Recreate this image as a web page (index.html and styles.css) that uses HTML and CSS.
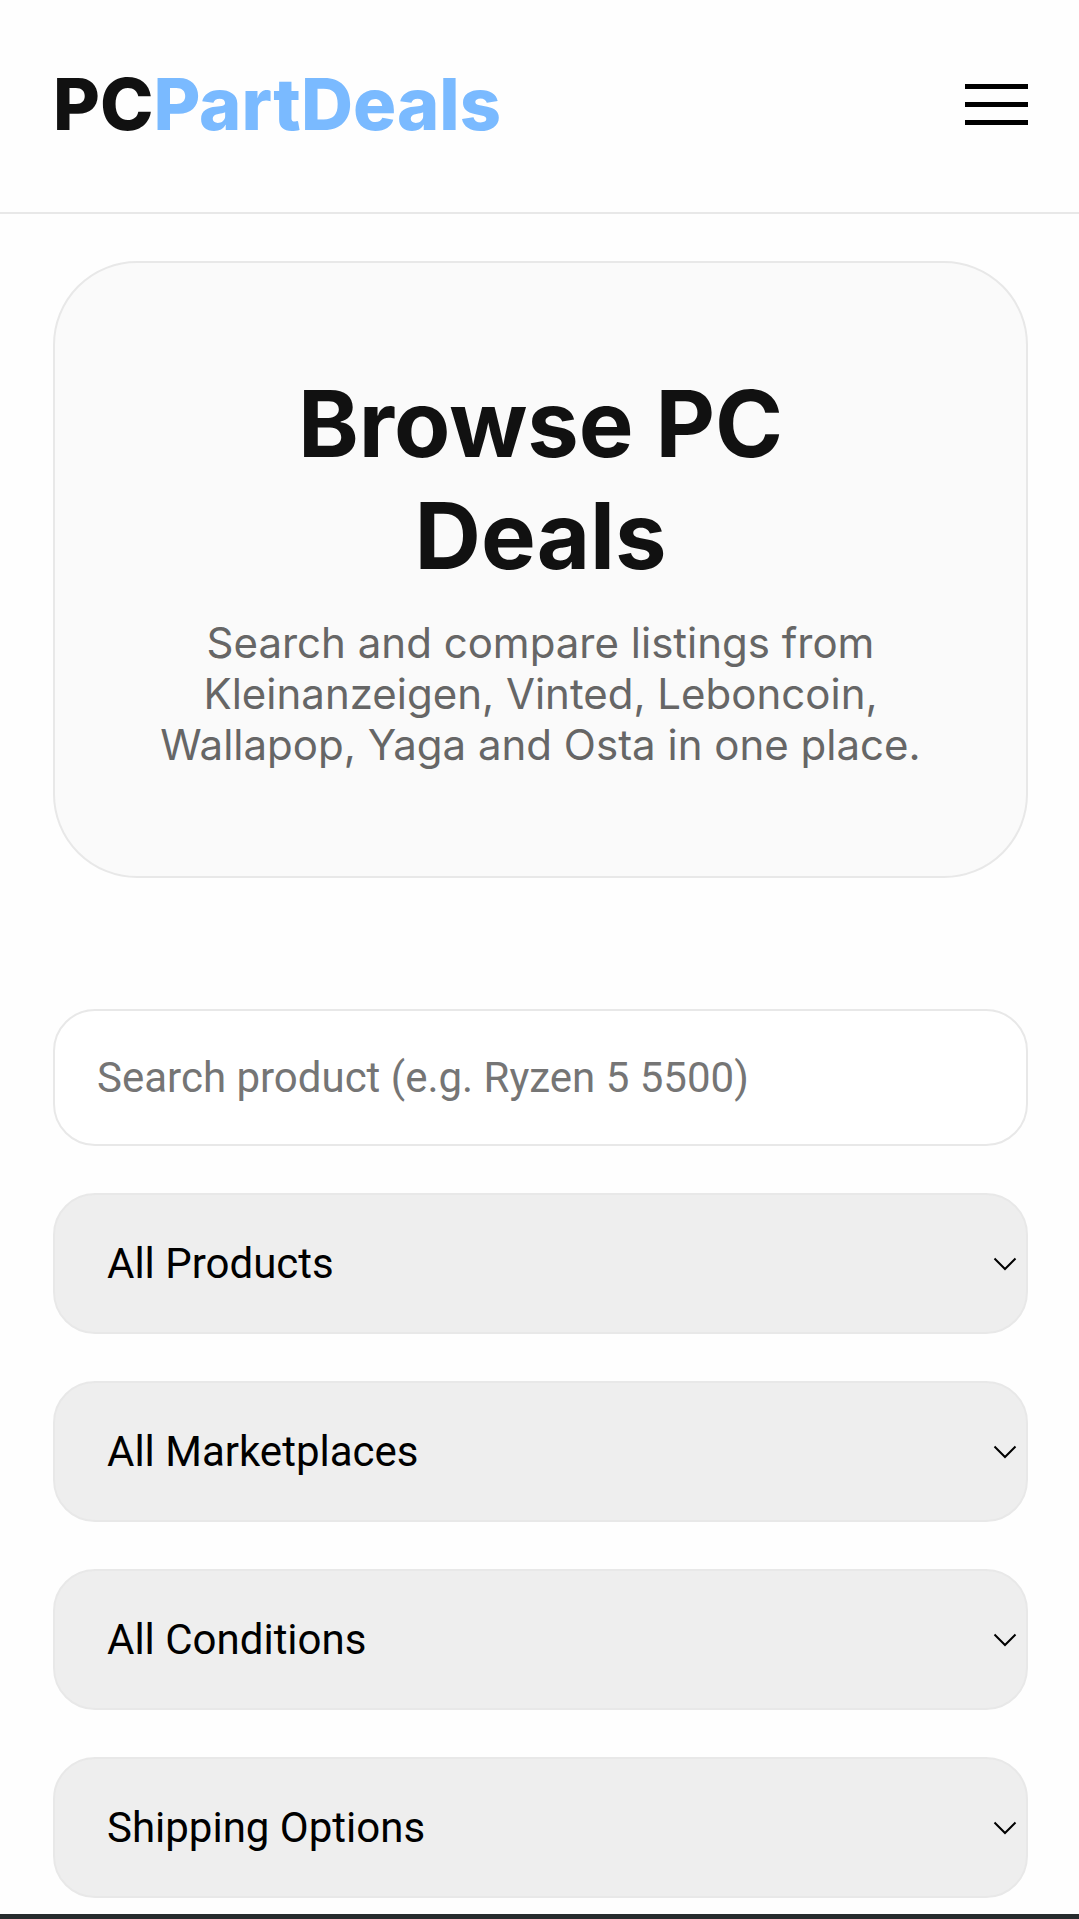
FILE: index.html
```html
<!DOCTYPE html>
<html lang="en">

<head>
  <meta charset="UTF-8">
  <meta name="viewport" content="width=device-width, initial-scale=1.0">
  <title>PCPartDeals</title>
  <link rel="stylesheet" href="styles.css">
</head>

<body>
  <header class="navbar">
    <a class="logo" href="#">PC<span>PartDeals</span></a>
    <button class="menu-toggle" type="button" aria-label="Open menu">
      <span></span>
      <span></span>
      <span></span>
    </button>
  </header>

  <main class="container">
    <section class="hero">
      <h1>Browse PC<br>Deals</h1>
      <p>Search and compare listings from Kleinanzeigen, Vinted, Leboncoin, Wallapop, Yaga and Osta in one place.</p>
    </section>

    <form class="filters">
      <input type="text" name="search" aria-label="Search product" placeholder="Search product (e.g. Ryzen 5 5500)">

      <div class="select-wrap">
        <select name="product" aria-label="Product">
          <option>All Products</option>
        </select>
        <svg class="arrow" viewBox="0 0 24 14" aria-hidden="true"><path d="M1.500 1.500l10.500 10.500L22.500 1.500"/></svg>
      </div>

      <div class="select-wrap">
        <select name="marketplace" aria-label="Marketplace">
          <option>All Marketplaces</option>
        </select>
        <svg class="arrow" viewBox="0 0 24 14" aria-hidden="true"><path d="M1.500 1.500l10.500 10.500L22.500 1.500"/></svg>
      </div>

      <div class="select-wrap">
        <select name="condition" aria-label="Condition">
          <option>All Conditions</option>
        </select>
        <svg class="arrow" viewBox="0 0 24 14" aria-hidden="true"><path d="M1.500 1.500l10.500 10.500L22.500 1.500"/></svg>
      </div>

      <div class="select-wrap">
        <select name="shipping" aria-label="Shipping">
          <option>Shipping Options</option>
        </select>
        <svg class="arrow" viewBox="0 0 24 14" aria-hidden="true"><path d="M1.500 1.500l10.500 10.500L22.500 1.500"/></svg>
      </div>
    </form>
  </main>

  <footer class="bottom-bar"></footer>
</body>

</html>
```

FILE: styles.css
```css
* {
  box-sizing: border-box;
}

body {
  margin: 0;
  min-height: 100vh;
  display: flex;
  flex-direction: column;
  background: #fefefe;
  color: #111;
  font-family: Inter, "Liberation Sans", sans-serif;
}

.navbar {
  display: flex;
  justify-content: space-between;
  align-items: center;
  padding: 60px 51px 64px 53px;
  border-bottom: 2px solid #e8e8e8;
}

.logo {
  color: #111;
  font-size: 72px;
  font-weight: 800;
  line-height: 88px;
  text-decoration: none;
}

.logo span {
  color: #7abaff;
}

.menu-toggle {
  display: flex;
  flex-direction: column;
  gap: 13px;
  padding: 0;
  border: none;
  background: none;
  cursor: pointer;
}

.menu-toggle span {
  width: 63px;
  height: 5px;
  background: #000;
}

.container {
  flex: 1;
  padding: 47px 51px 15px 53px;
}

.hero {
  padding: 105px 105px 106px;
  margin-bottom: 131px;
  border: 2px solid #e8e8e8;
  border-radius: 84px;
  background: #fafafa;
  text-align: center;
}

.hero h1 {
  margin: 0 0 25px;
  font-size: 92px;
  font-weight: 700;
  line-height: 112px;
}

.hero p {
  margin: 0;
  color: #666;
  font-size: 42px;
  line-height: 51px;
}

.filters {
  display: flex;
  flex-direction: column;
  gap: 47px;
}

.filters input,
.filters select {
  width: 100%;
  border: 2px solid #e8e8e8;
  border-radius: 42px;
  font-family: Roboto, "Liberation Sans", sans-serif;
  font-size: 42px;
}

.filters input {
  height: 137px;
  padding: 0 42px;
  background: #fff;
}

.filters input::placeholder {
  color: #757575;
}

.filters select {
  display: block;
  height: 141px;
  padding: 0 52px;
  background: #eee;
  color: #000;
  appearance: none;
}

.select-wrap {
  position: relative;
}

.arrow {
  position: absolute;
  right: 11px;
  top: 50%;
  width: 24px;
  height: 14px;
  margin-top: -7px;
  fill: none;
  stroke: #000;
  stroke-width: 2;
  pointer-events: none;
}

.bottom-bar {
  height: 5px;
  background: #262b2d;
}
```
